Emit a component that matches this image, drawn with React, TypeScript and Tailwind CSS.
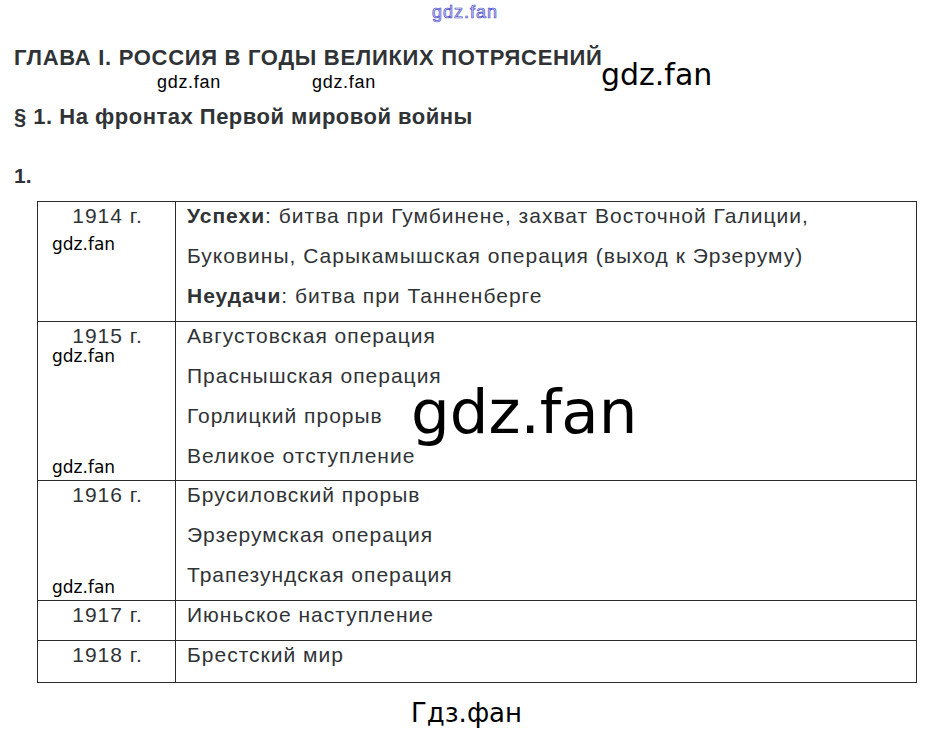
import React from 'react'

type Row = {
  year: string
  height: string
  lines: React.ReactNode[]
}

const rows: Row[] = [
  {
    year: '1914 г.',
    height: 'h-[120px]',
    lines: [
      <>
        <span className="font-bold">Успехи</span>: битва при Гумбинене, захват Восточной Галиции,
      </>,
      'Буковины, Сарыкамышская операция (выход к Эрзеруму)',
      <>
        <span className="font-bold">Неудачи</span>: битва при Танненберге
      </>,
    ],
  },
  {
    year: '1915 г.',
    height: 'h-[159px]',
    lines: ['Августовская операция', 'Праснышская операция', 'Горлицкий прорыв', 'Великое отступление'],
  },
  {
    year: '1916 г.',
    height: 'h-[120px]',
    lines: ['Брусиловский прорыв', 'Эрзерумская операция', 'Трапезундская операция'],
  },
  { year: '1917 г.', height: 'h-[40px]', lines: ['Июньское наступление'] },
  { year: '1918 г.', height: 'h-[41px]', lines: ['Брестский мир'] },
]

const sans = "font-['Liberation_Sans',Arial,sans-serif]"
const deja = "font-['DejaVu_Sans',Verdana,sans-serif]"

const App = () => {
  return (
    <div className="relative w-[929px] h-[731px] overflow-hidden bg-white text-[#303336]">
      {/* Page content */}
      <div className={`${sans} flex flex-col pt-[46px]`}>
        <h1 className="pl-[14px] text-[22px] leading-[24px] font-bold tracking-[0.7px]">
          ГЛАВА I. РОССИЯ В ГОДЫ ВЕЛИКИХ ПОТРЯСЕНИЙ
        </h1>
        <h2 className="mt-[35px] pl-[14px] text-[22px] leading-[24px] font-bold tracking-[0.5px]">
          § 1. На фронтах Первой мировой войны
        </h2>
        <p className="mt-[35px] pl-[14px] text-[21px] leading-[24px] font-bold">1.</p>

        {/* Table */}
        <div className="mt-[13px] ml-[37px] w-[880px] border border-[#2b2b2b]">
          {rows.map((row, i) => (
            <div
              key={row.year}
              className={`flex ${row.height} ${i < rows.length - 1 ? 'border-b border-[#2b2b2b]' : ''}`}
            >
              <div className="w-[138px] shrink-0 border-r border-[#2b2b2b] pl-[2px] text-center text-[21px] leading-[28px] tracking-[1px]">
                {row.year}
              </div>
              <div className="flex flex-col gap-[12px] pl-[11px] text-[21px] leading-[28px] tracking-[1px]">
                {row.lines.map((line, j) => (
                  <div key={j}>{line}</div>
                ))}
              </div>
            </div>
          ))}
        </div>

        <p className={`${deja} mt-[15px] text-center pl-[4px] text-[26px] leading-[30px] text-black`}>Гдз.фан</p>
      </div>

      {/* Watermarks */}
      <span
        className={`${sans} absolute left-[432px] top-[1px] text-[18px] leading-[22px] tracking-[1px] text-[#dcdcf6] [-webkit-text-stroke:0.7px_#4a4ac8]`}
      >
        gdz.fan
      </span>
      <span className={`${sans} absolute left-[157px] top-[71px] text-[18px] leading-[22px] tracking-[0.7px] text-black`}>
        gdz.fan
      </span>
      <span className={`${sans} absolute left-[312px] top-[71px] text-[18px] leading-[22px] tracking-[0.7px] text-black`}>
        gdz.fan
      </span>
      <span className={`${deja} absolute left-[601px] top-[58px] text-[30px] leading-[34px] text-black`}>gdz.fan</span>
      <span className={`${deja} absolute left-[52px] top-[234px] text-[17px] leading-[20px] text-black`}>gdz.fan</span>
      <span className={`${deja} absolute left-[52px] top-[346px] text-[17px] leading-[20px] text-black`}>gdz.fan</span>
      <span className={`${deja} absolute left-[52px] top-[457px] text-[17px] leading-[20px] text-black`}>gdz.fan</span>
      <span className={`${deja} absolute left-[52px] top-[577px] text-[17px] leading-[20px] text-black`}>gdz.fan</span>
      <span className={`${deja} absolute left-[411px] top-[377px] text-[61px] leading-[70px] text-black`}>gdz.fan</span>
    </div>
  )
}

export default App
